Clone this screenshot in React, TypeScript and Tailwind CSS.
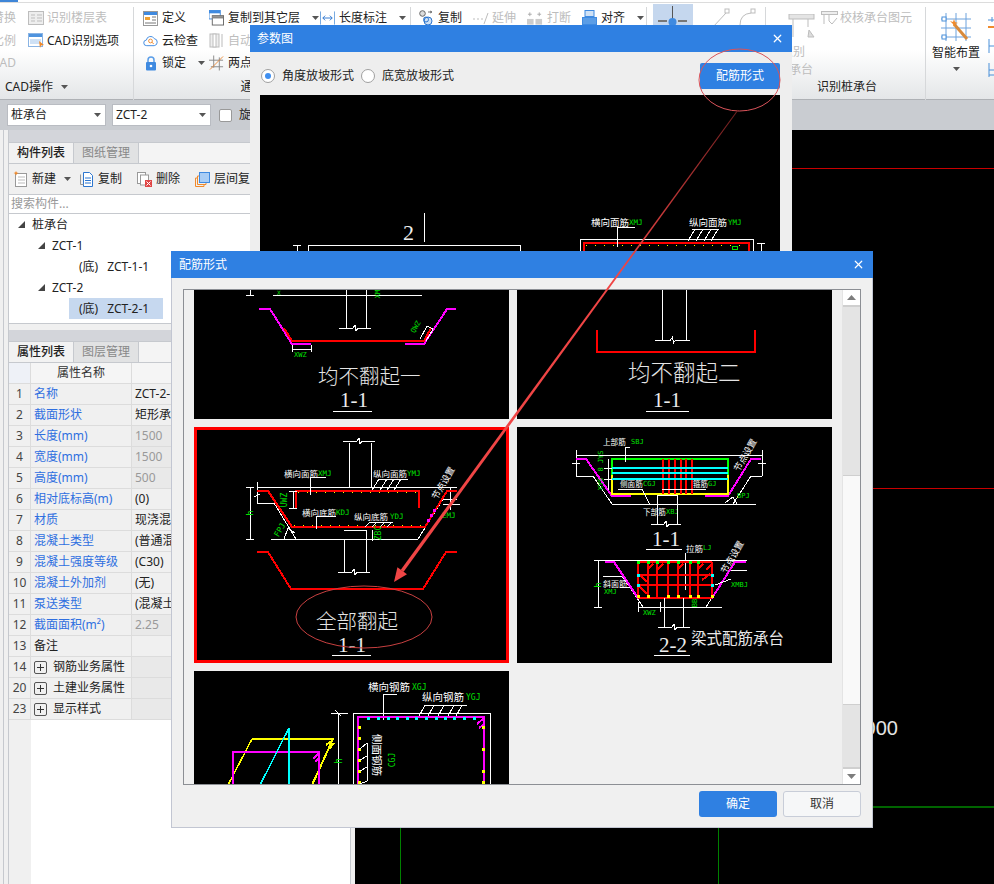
import React from "react";
import { X } from "lucide-react";

const GRAY = "#bdbdbd";
const MONO = "font-['DejaVu_Sans_Mono',monospace]";

function L({ p, c = "#fff", w = 1, dash }: { p: string; c?: string; w?: number; dash?: string }) {
  return <polyline points={p} fill="none" stroke={c} strokeWidth={w} strokeDasharray={dash} />;
}
function T({ x, y, s = 9, c = "#fff", r, a, children }: { x: number; y: number; s?: number; c?: string; r?: number; a?: "start" | "middle" | "end"; children: React.ReactNode }) {
  const green = c === "#00e000";
  return (
    <text x={x} y={y} fontSize={s} fill={c} textAnchor={a} dominantBaseline="central" className={green ? MONO : undefined} transform={r !== undefined ? `rotate(${r} ${x} ${y})` : undefined}>
      {children}
    </text>
  );
}
function Title({ x, y, s = 20, children }: { x: number; y: number; s?: number; children: React.ReactNode }) {
  return (
    <text x={x} y={y} fontSize={s} fill="#e4e4e4" fontWeight={300} dominantBaseline="central">{children}</text>
  );
}
function Sec({ x, y, u, x1, x2, label = "1-1" }: { x: number; y: number; u: number; x1: number; x2: number; label?: string }) {
  return (
    <>
      <text x={x} y={y} fontSize={21} fill="#ececec" dominantBaseline="central" className="font-['Liberation_Serif',serif]">{label}</text>
      <L p={`${x1},${u} ${x2},${u}`} />
    </>
  );
}
function Cap({ x1, x2, y }: { x1: number; x2: number; y: number }) {
  const m = (x1 + x2) / 2;
  return <L p={`${x1},${y} ${m - 2},${y} ${m},${y - 3} ${m + 1},${y + 3} ${m + 3},${y} ${x2},${y}`} />;
}
function Hatch({ xs, y1, y2, d = 7 }: { xs: number[]; y1: number; y2: number; d?: number }) {
  return <>{xs.map((x) => <L key={x} p={`${x},${y2} ${x + d},${y1}`} />)}</>;
}
function Dots({ pts, c }: { pts: number[][]; c: string }) {
  return <>{pts.map(([x, y], i) => <rect key={i} x={x - 1} y={y - 1} width={2.5} height={2.5} fill={c} />)}</>;
}

function Panel1() {
  return (
    <svg viewBox="194 290 315 129" className="w-full h-full block bg-black" shapeRendering="crispEdges">
      <L p="273,295 422,295" />
      <L p="246,295 254,295" /><L p="250,290 250,295" />
      <L p="346,290 346,328" /><L p="366,290 366,328" />
      <Cap x1={339} x2={371} y={328} />
      <T x={277} y={292} s={6} c="#00e000">X</T>
      <T x={378} y={292} s={7} c="#00e000" r={-90} a="middle">XMJ</T>
      <L p="259,309 270,309 292,344 311,344" c="#ff00ff" w={2} />
      <L p="405,344 424,344 447,309 456,309" c="#ff00ff" w={2} />
      <L p="284,328 292,341 424,341 431,328" c="#ff0000" w={2} />
      <L p="292,345 292,352" /><L p="311,345 311,352" /><L p="292,349 311,349" />
      <T x={294} y={355} s={7} c="#00e000">XWZ</T>
      <T x={416} y={327} s={7} c="#00e000" r={-60} a="middle">QWZ</T>
      <L p="420,339 427,326 433,329 426,341" />
      <Title x={318} y={376} s={20.5}>均不翻起一</Title>
      <Sec x={340} y={400} u={411} x1={333} x2={372} />
    </svg>
  );
}
function Panel2() {
  return (
    <svg viewBox="517 290 315 129" className="w-full h-full block bg-black" shapeRendering="crispEdges">
      <L p="662,290 662,340" /><L p="686,290 686,340" />
      <Cap x1={655} x2={690} y={340} />
      <L p="597,330 597,352 755,352 755,330" c="#ff0000" w={2} />
      <Title x={628} y={372} s={22.5}>均不翻起二</Title>
      <Sec x={653} y={400} u={411} x1={646} x2={689} />
    </svg>
  );
}
function Panel3() {
  return (
    <svg viewBox="197 430 309 230" className="w-full h-full block bg-black" shapeRendering="crispEdges">
      <L p="349,443 349,487" /><L p="371,443 371,487" />
      <Cap x1={343} x2={375} y={441} />
      <L p="257,487 457,487" />
      <L p="246,487 254,487" /><L p="246,539 254,539" /><L p="250,487 250,539" />
      <T x={250} y={513} s={9} c="#00e000" r={-90} a="middle">h</T>
      <L p="257,482 257,503" /><L p="254,497 260,494" /><L p="257,503 274,503 296,539" />
      <L p="271,539 418,539 443,499 457,499" />
      <L p="450,487 450,510" /><L p="443,504 460,504" />
      <L p="257,491 268,491 292,527 425,527 447,491 457,491" c="#ff0000" w={2} />
      <L p="296,508 296,491 419,491 419,508" c="#ff0000" w={2} />
      <L p="298,492 418,492" c="#ffff00" dash="1 8" />
      <L p="294,525 424,525" c="#ffff00" dash="1 8" />
      <L p="293,491 293,508" /><L p="289,491 297,491" /><L p="289,508 297,508" />
      <T x={284} y={500} s={8} c="#00e000" r={-90} a="middle">UWZ</T>
      <T x={284} y={473} s={8.5}>横向面筋</T><T x={318} y={473} s={7.5} c="#00e000">XMJ</T>
      <L p="326,477 310,477 310,495" />
      <T x={373} y={473} s={8.5}>纵向面筋</T><T x={407} y={473} s={7.5} c="#00e000">YMJ</T>
      <Hatch xs={[372, 380, 387, 394]} y1={479} y2={490} d={7} />
      <L p="379,479 408,479" />
      <T x={302} y={512} s={8.5}>横向底筋</T><T x={336} y={512} s={7.5} c="#00e000">KDJ</T>
      <L p="336,516 316,516 316,529" />
      <T x={354} y={516} s={8.5}>纵向底筋</T><T x={390} y={516} s={7.5} c="#00e000">YDJ</T>
      <Hatch xs={[365, 372, 380, 387]} y1={522} y2={527} d={5} />
      <L p="369,522 393,522" />
      <L p="344,539 344,572" /><L p="366,530 366,572" /><L p="344,530 366,530" />
      <Cap x1={338} x2={370} y={572} />
      <T x={378} y={533} s={8} c="#00e000" r={-90} a="middle">ZBC</T>
      <L p="372,530 372,541" />
      <T x={280} y={530} s={8} c="#00e000" r={-60} a="middle">FPJ</T>
      <L p="284,539 288,528 295,533" />
      <T x={442} y={515} s={7.5} c="#00e000">EMJ</T>
      <T x={443} y={483} s={9} r={-60} a="middle">节点设置</T>
      <Dots pts={[[428, 520], [431, 515], [434, 510]]} c="#ff00ff" />
      <L p="257,552 268,552 291,589 423,589 446,552 457,552" c="#ff0000" w={2} />
      <Title x={316} y={621} s={20.5}>全部翻起</Title>
      <Sec x={338} y={645} u={655} x1={332} x2={371} />
    </svg>
  );
}
function Panel4() {
  const gridX = [638, 648, 657, 668, 678, 690, 698, 712];
  return (
    <svg viewBox="517 427 315 236" className="w-full h-full block bg-black" shapeRendering="crispEdges">
      <L p="576,455 762,455" /><L p="576,450 576,476" /><L p="762,450 762,476" />
      <L p="572,463 580,463" /><L p="758,463 766,463" />
      <L p="576,476 593,476 612,504 756,504" /><L p="733,504 751,476 762,476" />
      <L p="576,459 586,459 612,496 631,496" c="#ff00ff" w={2} />
      <L p="705,496 728,496 751,459 761,459" c="#ff00ff" w={2} />
      <L p="612,475 612,459 728,459 728,475" c="#00ff00" w={2} />
      <L p="612,475 612,494 728,494 728,475" c="#ffff00" w={2} />
      {[663, 669, 675, 681, 686, 692].map((x) => <L key={x} p={`${x},459 ${x},494`} c="#ff0000" w={2} />)}
      {[468, 473, 479].map((y) => <L key={y} p={`612,${y} 728,${y}`} c="#00ffff" w={2} />)}
      <L p="608,459 608,490" /><L p="604,468 612,468" /><L p="604,479 612,479" />
      <T x={603} y={442} s={7.6}>上部筋</T><T x={631} y={442} s={7} c="#00e000">SBJ</T>
      <L p="630,447 625,447 625,462" />
      <T x={601} y={461} s={7} c="#00e000" r={-90} a="middle">8 JYS</T>
      <T x={601} y={484} s={7} c="#00e000" r={-90} a="middle">XYS</T>
      <T x={620} y={484} s={7.6}>侧面筋</T><T x={643} y={484} s={7} c="#00e000">CGJ</T>
      <L p="618,489 643,489" /><L p="642,489 650,505" />
      <T x={693} y={484} s={7.5}>箍筋</T><T x={708} y={484} s={7} c="#00e000">GJ</T>
      <L p="662,489 706,489" />
      <T x={643} y={512} s={7.6}>下部筋</T><T x={666} y={512} s={7} c="#00e000">XBJ</T>
      <T x={745} y={455} s={9} r={-60} a="middle">节点设置</T>
      <T x={737} y={496} s={7} c="#00e000">BPJ</T>
      <L p="725,503 733,497 737,504" />
      <L p="657,495 657,524" /><L p="677,495 677,524" /><L p="657,495 677,495" />
      <Cap x1={651} x2={681} y={524} />
      <Sec x={652} y={539} u={549} x1={646} x2={682} />
      <T x={686} y={548} s={8.5}>拉筋</T><T x={703} y={548} s={7} c="#00e000">LJ</T>
      <L p="685,553 685,590" />
      <L p="600,560 747,560" />
      <L p="594,560 602,560" /><L p="594,607 602,607" /><L p="598,560 598,607" />
      <T x={598} y={585} s={9} c="#00e000" r={-90} a="middle">h</T>
      <L p="603,576 622,576 643,607 722,607" /><L p="706,607 730,570 747,570" />
      <L p="605,562 614,562 638,598 659,598" c="#ff00ff" w={2} />
      <L p="688,598 712,598 735,562 746,562" c="#ff00ff" w={2} />
      {gridX.map((x) => <L key={x} p={`${x},562 ${x},598`} c="#ff0000" w={2} />)}
      {[562, 575, 585, 598].map((y) => <L key={y} p={`638,${y} 712,${y}`} c="#ff0000" w={2} />)}
      {[650, 660, 680, 700, 709].map((x) => <L key={x} p={`${x - 3},570 ${x + 3},564`} c="#ff0000" w={2} />)}
      <L p="640,575 647,582" c="#ff0000" w={2} /><L p="640,587 647,594" c="#ff0000" w={2} /><L p="702,580 710,574" c="#ff0000" w={2} />
      <Dots pts={[[638, 562], [648, 562], [657, 562], [668, 562], [678, 562], [690, 562], [698, 562]]} c="#00ff00" />
      <Dots pts={[[638, 575], [638, 585], [712, 575], [712, 585]]} c="#00ffff" />
      <Dots pts={[[638, 596], [648, 596], [668, 596], [678, 596], [690, 596], [698, 596], [712, 596]]} c="#ffff00" />
      <T x={603} y={583} s={8}>斜面筋</T><T x={604} y={592} s={7} c="#00e000">XMJ</T>
      <L p="620,587 629,587" />
      <T x={731} y={585} s={7} c="#00e000">XMBJ</T>
      <L p="715,585 731,579" />
      <T x={732} y={557} s={9} r={-60} a="middle">节点设置</T>
      <L p="638,607 660,607" /><L p="638,602 638,612" /><L p="660,602 660,612" />
      <T x={643} y={613} s={7} c="#00e000">XWZ</T>
      <L p="664,598 664,627" /><L p="683,598 683,627" />
      <Cap x1={658} x2={690} y={627} />
      <T x={695} y={603} s={7} c="#00e000" r={-90} a="middle">BB</T>
      <Sec x={659} y={645} u={655} x1={654} x2={690} label="2-2" />
      <T x={691} y={638} s={15.5} c="#e8e8e8">梁式配筋承台</T>
    </svg>
  );
}
function Panel5() {
  const top = [368, 378, 388, 397, 407, 416, 426, 436, 445, 454, 464, 474];
  return (
    <svg viewBox="194 671 315 114" className="w-full h-[114px] block bg-black" shapeRendering="crispEdges">
      <T x={368} y={687} s={10.5}>横向钢筋</T><T x={412} y={687} s={8} c="#00e000">XGJ</T>
      <L p="397,694 383,694 383,720" />
      <T x={422} y={697} s={10.5}>纵向钢筋</T><T x={466} y={697} s={8} c="#00e000">YGJ</T>
      <L p="424,705 467,705" />
      <Hatch xs={[418, 427, 437, 447, 455]} y1={705} y2={718} d={7} />
      <L p="353,785 353,713 490,713 490,785" />
      <L p="358,785 358,717 484,717 484,785" c="#ff00ff" w={2} />
      <Dots pts={top.map((x) => [x, 718])} c="#00ffff" />
      <Dots pts={[[359, 727], [359, 738], [359, 749], [359, 760], [359, 771], [359, 782], [483, 727], [483, 749], [483, 771], [483, 782]]} c="#ffff00" />
      <L p="477,724 484,718" c="#ff00ff" w={2} /><L p="479,728 484,724" c="#ff00ff" w={2} />
      <L p="331,713 348,713" /><L p="338,713 338,785" /><L p="335,710 341,716" />
      <T x={338} y={761} s={10} c="#00e000" r={-90} a="middle">h</T>
      <L p="367,743 367,781 360,784" />
      <Hatch xs={[360]} y1={743} y2={749} d={7} /><Hatch xs={[360]} y1={756} y2={760} d={7} /><Hatch xs={[360]} y1={767} y2={771} d={7} />
      <T x={377} y={755} s={10.5} r={90} a="middle">侧面钢筋</T>
      <T x={392} y={760} s={8} c="#00e000" r={-90} a="middle">CGJ</T>
      <L p="252,739 333,739 312,785" c="#ffff00" w={2} />
      <L p="252,739 228,785" c="#ffff00" w={1.5} />
      <L p="326,745 333,740" c="#ffff00" w={2} /><L p="329,749 334,743" c="#ffff00" w={2} />
      <L p="233,785 233,752 319,752 319,785" c="#ff00ff" w={2} />
      <L p="313,759 319,753" c="#ff00ff" w={2} /><L p="315,762 319,758" c="#ff00ff" w={2} />
      <L p="289,728 289,785" c="#00ffff" w={2} />
      <L p="289,728 260,785" c="#00ffff" w={1.5} />
    </svg>
  );
}

const Caret = ({ cls = "ml-2" }: { cls?: string }) => (
  <svg width="7" height="4" viewBox="0 0 7 4" className={cls + " shrink-0"}><path d="M0 0h7L3.5 4z" fill="#555" /></svg>
);

function Item({ icon, label, gray, caret, w = 15, gap = 4, cls = "" }: { icon?: React.ReactNode; label: string; gray?: boolean; caret?: boolean; w?: number; gap?: number; cls?: string }) {
  return (
    <div className={"flex items-center h-[22.5px] text-[12px] whitespace-nowrap " + cls} style={{ gap }}>
      {icon && <span className="flex items-center justify-center shrink-0" style={{ width: w }}>{icon}</span>}
      <span className={gray ? "text-[#bdbdbd]" : "text-[#222]"}>{label}</span>
      {caret && <Caret />}
    </div>
  );
}

const I = {
  layerTbl: <svg width="18" height="15" viewBox="0 0 18 15"><rect x=".5" y=".5" width="15" height="13" fill="#eee" stroke={GRAY} /><path d="M3 4h4M3 7h4M3 10h4M9 4h5M9 7h5M9 10h5" stroke={GRAY} /></svg>,
  cad: <svg width="18" height="16" viewBox="0 0 18 16"><rect x=".5" y=".5" width="14" height="13" fill="#fff" stroke="#8ab4e4" /><rect x="1" y="1" width="13" height="3" fill="#4e93de" /><rect x="2" y="6" width="11" height="5" fill="#cfe1f5" /><path d="M11 8l5 4-3 .5-1 2.5z" fill="#f08a2c" /></svg>,
  def: <svg width="15" height="15" viewBox="0 0 15 15"><rect x=".5" y=".5" width="14" height="14" fill="#fff" stroke="#999" /><rect x="1" y="1" width="13" height="3" fill="#3f8ae0" /><rect x="2" y="6" width="5" height="3" fill="#f0a030" /><path d="M9 6h4M9 9h4M2 12h11" stroke="#777" /></svg>,
  cloud: <svg width="16" height="13" viewBox="0 0 16 13"><path d="M4 12a3 3 0 0 1-.4-6A4.5 4.5 0 0 1 12 4.500a3.800 3.800 0 0 1 0 7.500z" fill="#fff" stroke="#3f8ae0" /><circle cx="8" cy="7" r="2" fill="none" stroke="#f08a2c" /><path d="M9.500 8.500l2 1.500" stroke="#f08a2c" /></svg>,
  lock: <svg width="12" height="15" viewBox="0 0 12 15"><path d="M3 7V4a3 3 0 0 1 6 0v3" fill="none" stroke="#5a9de8" strokeWidth="1.500" /><rect x="1" y="6" width="10" height="8.500" rx="1" fill="#3f8ae0" /><circle cx="6" cy="10" r="1.300" fill="#fff" /></svg>,
  copyLayer: <svg width="16" height="16" viewBox="0 0 16 16"><rect x="0" y="0" width="12" height="9" fill="#fff" stroke="#3f8ae0" /><rect y="0" width="12" height="3" fill="#3f8ae0" /><rect x="3.500" y="5.500" width="12" height="10" fill="#fff" stroke="#666" /><rect x="4" y="6" width="11" height="2.500" fill="#888" /></svg>,
  auto: <svg width="15" height="15" viewBox="0 0 15 15"><rect x="1" y="1" width="9" height="13" fill="#eee" stroke={GRAY} /><rect x="4" y="1" width="3" height="13" fill="#fff" stroke={GRAY} /><rect x="12" y="1" width="2" height="13" fill="#ddd" /></svg>,
  two: <svg width="16" height="16" viewBox="0 0 16 16"><path d="M0 5h15M2 12h13M5 0v13M11 2v14" stroke="#888" /><path d="M1 15L15 1" stroke="#e88a3a" /></svg>,
  dim: <svg width="16" height="14" viewBox="0 0 16 14"><path d="M.5 0v14M15.500 0v14" stroke="#6ca2dd" /><path d="M3 7h10M3 7l2.500-2.500M3 7l2.500 2.500M13 7l-2.500-2.500M13 7l-2.500 2.500" stroke="#2d76cf" fill="none" /></svg>,
  copy: <svg width="15" height="16" viewBox="0 0 15 16"><circle cx="3.500" cy="3.500" r="2.800" fill="#ddd" stroke="#666" /><circle cx="9" cy="11" r="4" fill="#cfe1f5" stroke="#2d76cf" /><circle cx="7" cy="9.500" r="2.500" fill="none" stroke="#2d76cf" /><path d="M9 2h4M11 1l2 1-2 1" fill="none" stroke="#777" /></svg>,
  extend: <svg width="17" height="12" viewBox="0 0 17 12"><path d="M0 7h2M4 7h2M8 7h2" stroke={GRAY} /><path d="M11 12l4-11" stroke={GRAY} /></svg>,
  breakI: <svg width="17" height="14" viewBox="0 0 17 14"><rect y="8" width="7" height="6" fill="#ccc" /><rect x="9" y="8" width="7" height="6" fill="#ccc" /><path d="M3 1v4M1 3h4M13 1v4M11 3h4" stroke="#aaa" /></svg>,
  align: <svg width="15" height="16" viewBox="0 0 15 16"><rect x="3" y=".5" width="9" height="6" fill="#cfe1f5" stroke="#3f8ae0" /><rect x=".5" y="7.500" width="14" height="7" fill="#5b9de6" stroke="#3f8ae0" /><path d="M0 15.500h15" stroke="#444" /></svg>,
  newI: <svg width="14" height="16" viewBox="0 0 14 16"><rect x="2.500" y="2.500" width="11" height="13" fill="#fff" stroke="#999" /><path d="M5 6h7M5 9h7M5 12h7" stroke="#bbb" /><path d="M3 0l.8 1.500L5.500 2l-1.500.8L3 4.500 2.200 2.800.5 2l1.700-.5z" fill="#f08a2c" /></svg>,
  copyDoc: <svg width="13" height="15" viewBox="0 0 13 15"><path d="M3.500.5h6l3 3v11h-9z" fill="#fff" stroke="#2d76cf" /><path d="M.5 2.500v10h3" fill="none" stroke="#999" /><path d="M5 6h6M5 8.500h6M5 11h6" stroke="#2d76cf" /></svg>,
  del: <svg width="15" height="15" viewBox="0 0 15 15"><rect x=".5" y=".5" width="8" height="11" fill="#fff" stroke="#999" /><rect x="3.500" y="3" width="8" height="10" fill="#fff" stroke="#999" /><rect x="8" y="8" width="7" height="7" fill="#e04545" /><path d="M9.500 9.500l4 4M13.500 9.500l-4 4" stroke="#fff" /></svg>,
  layerCopy: <svg width="15" height="15" viewBox="0 0 15 15"><rect x="4.500" y=".5" width="10" height="10" fill="#a9cdf5" stroke="#3f8ae0" /><path d="M4 4H2.500v8.500H11V11M2 6H.5v8.500H9V13" fill="none" stroke="#f08a2c" /></svg>,
};

function Ribbon() {
  const grp = "flex flex-col h-[93px] shrink-0 border-r border-[#d6d8da]";
  const tools = "flex h-[66px]";
  const lab = "h-[22px] mt-[3px] flex items-center text-[12px] text-[#222] whitespace-nowrap";
  return (
    <div className="h-[100px] shrink-0 bg-linear-to-b from-white from-50% to-[#e4e6e8] border-b border-[#aeb1b5]">
      <div className="h-[3px] border-b border-[#dcdcdc]"><div className="w-[18px] h-[2px] bg-[#3f86d8]" /></div>
      <div className="flex pt-[4px]">
        <div className={grp + " w-[134px]"}>
          <div className={tools}>
            <div className="w-[28px] -ml-[8px] mr-[8px]">
              <Item label="替换" gray /><Item label="比例" gray /><Item label="CAD" gray />
            </div>
            <div>
              <Item icon={I.layerTbl} label="识别楼层表" gray w={18} gap={1} />
              <Item icon={I.cad} label="CAD识别选项" w={18} gap={1} />
            </div>
          </div>
          <div className={lab + " pl-[5px]"}>CAD操作<Caret /></div>
        </div>
        <div className={grp + " w-[277px] pl-[9px]"}>
          <div className={tools}>
            <div className="w-[66px]">
              <Item icon={I.def} label="定义" />
              <Item icon={I.cloud} label="云检查" />
              <Item icon={I.lock} label="锁定" caret />
            </div>
            <div className="w-[111px]">
              <Item icon={I.copyLayer} label="复制到其它层" caret />
              <Item icon={I.auto} label="自动" gray />
              <Item icon={I.two} label="两点" />
            </div>
            <div>
              <Item icon={I.dim} label="长度标注" caret />
            </div>
          </div>
          <div className={lab + " justify-center pr-[9px]"}>通用操作<Caret /></div>
        </div>
        <div className={grp + " w-[236px] pl-[8px]"}>
          <div className="flex gap-[11px]">
            <Item icon={I.copy} label="复制" />
            <Item icon={I.extend} label="延伸" gray w={17} gap={2} />
            <Item icon={I.breakI} label="打断" gray w={16} />
            <Item icon={I.align} label="对齐" caret />
          </div>
        </div>
        <div className={grp + " w-[119px] pl-[6px]"}>
          <div className="flex -mt-[3px]">
            <div className="w-[40px] h-[36px] bg-[#c5d7ee] flex justify-center">
              <svg width="40" height="30" viewBox="0 0 40 30"><path d="M19.500 2v14" stroke="#555" /><path d="M5 17h9M25 17h9" stroke="#777" strokeWidth="2" /><circle cx="19.500" cy="18" r="4" fill="#3f8ae0" /></svg>
            </div>
            <svg width="46" height="22" viewBox="0 0 46 22" className="ml-[19px] mt-[3px]"><path d="M1 20L14 6" stroke={GRAY} /><rect x="13" y="2" width="4" height="4" fill="#fff" stroke={GRAY} /><path d="M28 18q0-11 11-12" fill="none" stroke={GRAY} /><rect x="39" y="2" width="4" height="4" fill="#fff" stroke={GRAY} /></svg>
          </div>
        </div>
        <div className={grp + " w-[160px] pl-[15px]"}>
          <div className="flex h-[66px]">
            <div className="w-[40px] flex flex-col items-center">
              <svg width="27" height="27" viewBox="0 0 27 27" className="mt-[7px] shrink-0"><rect x="1" y="0" width="25" height="5" fill="#e4e4e4" stroke={GRAY} /><path d="M5 5v18M20 5v8" stroke={GRAY} /><path d="M21 16l5 7h-6z" fill="#ddd" stroke={GRAY} /></svg>
              <span className="text-[12px] mt-[2px] leading-[18px] text-[#bdbdbd] whitespace-nowrap -ml-[16px]">识别</span>
              <span className="text-[12px] leading-[18px] text-[#bdbdbd] whitespace-nowrap">承台</span>
            </div>
            <Item icon={<svg width="17" height="14" viewBox="0 0 17 14"><rect x=".5" y=".5" width="16" height="3" fill="#eee" stroke={GRAY} /><path d="M3 4v9M8 4v6M8 10l3 3 5-6" fill="none" stroke={GRAY} /></svg>} label="校核承台图元" gray w={17} gap={2} />
          </div>
          <div className={lab + " pl-[36px]"}>识别桩承台</div>
        </div>
        <div className="w-[62px] shrink-0 flex flex-col items-center pr-[2px]">
          <svg width="30" height="30" viewBox="0 0 30 30" className="mt-[5px] shrink-0"><path d="M5 1v28M15 1v28M25 1v28M0 7h30M0 16h30M0 25h30" stroke="#6ca2dd" fill="none" /><path d="M13 12l13 15" stroke="#d98a3a" strokeWidth="3" /><path d="M9 9l3 1 1-3 1 3 3 1-3 1-1 3-1-3z" fill="#f08a2c" /><rect x="1" y="5" width="4" height="4" fill="#fff" stroke="#4a90d9" /><rect x="1" y="23" width="4" height="4" fill="#fff" stroke="#4a90d9" /></svg>
          <span className="text-[12px] mt-[3px] leading-[16px] text-[#222] whitespace-nowrap">智能布置</span>
          <Caret cls="mt-[6px]" />
        </div>
        <div className="flex flex-col gap-[10px] pt-[10px]">
          <svg width="8" height="12" viewBox="0 0 8 12"><path d="M4 0v5M0 3h8" stroke="#4a90d9" /><path d="M0 10h8" stroke="#f08a2c" strokeWidth="2" /></svg>
          <svg width="8" height="14" viewBox="0 0 8 14"><path d="M1 0v14M1 7h7" stroke="#4a90d9" /></svg>
          <svg width="8" height="14" viewBox="0 0 8 14"><path d="M1 0v14M1 7h7M1 12h7" stroke="#4a90d9" /></svg>
        </div>
      </div>
    </div>
  );
}

function Combo({ label }: { label: string }) {
  return (
    <div className="w-[99px] h-[22px] bg-white border border-[#b9bcc2] flex items-center justify-between pl-[3px] pr-[4px] text-[12px] text-[#222]">
      {label}<Caret cls="" />
    </div>
  );
}

function Toolbar() {
  return (
    <div className="h-[30px] shrink-0 bg-[#c9ccd1] flex items-center pl-[7px] gap-[6px]">
      <Combo label="桩承台" />
      <Combo label="ZCT-2" />
      <div className="w-[13px] h-[13px] ml-[2px] bg-white border border-[#999] rounded-[2px]" />
      <span className="text-[12px] text-[#222] ml-[1px]">旋转</span>
    </div>
  );
}

function Tabs({ a, b }: { a: string; b: string }) {
  return (
    <div className="h-[22px] shrink-0 flex text-[12px] bg-[#f4f4f4] border-y border-[#c6c9ce]">
      <div className="w-[65px] pl-[8px] bg-[#f2f2f2] border-r border-[#c6c9ce] font-medium text-[#222] leading-[20px]">{a}</div>
      <div className="w-[65px] pl-[8px] bg-[#e1e2e3] border-r border-[#c6c9ce] text-[#888] leading-[20px]">{b}</div>
    </div>
  );
}

function Tree({ pl, tri, label, val, sel }: { pl: number; tri?: boolean; label?: string; val?: string; sel?: boolean }) {
  return (
    <div className="h-[21px] flex items-center text-[12px] text-[#222]" style={{ paddingLeft: pl }}>
      {tri && <svg width="7" height="7" viewBox="0 0 7 7" className="mr-[7px]"><path d="M7 0v7H0z" fill="#444" /></svg>}
      {label}
      {val && (
        <div className={"flex h-[21px] items-center pl-[10px] w-[94px] gap-[9px] " + (sel ? "bg-[#c6d8ef]" : "")}>
          <span>(底)</span><span>{val}</span>
        </div>
      )}
    </div>
  );
}

const rows: [number, string, string, boolean?][] = [
  [1, "名称", "ZCT-2-1"],
  [2, "截面形状", "矩形承台"],
  [3, "长度(mm)", "1500", true],
  [4, "宽度(mm)", "1500", true],
  [5, "高度(mm)", "500", true],
  [6, "相对底标高(m)", "(0)"],
  [7, "材质", "现浇混凝土"],
  [8, "混凝土类型", "(普通混凝土)"],
  [9, "混凝土强度等级", "(C30)"],
  [10, "混凝土外加剂", "(无)"],
  [11, "泵送类型", "(混凝土泵)"],
  [12, "截面面积(m²)", "2.25", true],
];
const cell = "h-[21px] border-b border-r border-[#dcdcdc] flex items-center text-[12px] whitespace-nowrap overflow-hidden";
const numCell = cell + " bg-[#f0f0f0] justify-center text-[#444]";

function PropTable() {
  return (
    <div className="grid grid-cols-[22px_101px_1fr] shrink-0">
      <div className={cell + " bg-[#eef1f7]"} />
      <div className={cell + " bg-[#f5f5f5] justify-center text-[#333]"}>属性名称</div>
      <div className={cell + " bg-[#f5f5f5]"} />
      {rows.map(([n, name, v, g]) => (
        <React.Fragment key={n}>
          <div className={numCell}>{n}</div>
          <div className={cell + " pl-[3px] text-[#2f6fe0]"}>{name}</div>
          <div className={cell + " pl-[3px] " + (g ? "bg-[#e9e9e9] text-[#999]" : "text-[#222]")}>{v}</div>
        </React.Fragment>
      ))}
      <div className={numCell}>13</div>
      <div className={cell + " pl-[3px] text-[#222]"}>备注</div>
      <div className={cell} />
      {([[14, "钢筋业务属性"], [20, "土建业务属性"], [23, "显示样式"]] as [number, string][]).map(([n, t]) => (
        <React.Fragment key={n}>
          <div className={numCell}>{n}</div>
          <div className={cell + " pl-[3px] text-[#222] gap-[6px]"}>
            <span className="w-[13px] h-[13px] border border-[#555] rounded-[2px] flex items-center justify-center">
              <svg width="7" height="7" viewBox="0 0 7 7"><path d="M3.500 0v7M0 3.500h7" stroke="#333" /></svg>
            </span>
            {t}
          </div>
          <div className={cell + " bg-[#e9e9e9]"} />
        </React.Fragment>
      ))}
    </div>
  );
}

function LeftPanel() {
  return (
    <div className="w-[355px] shrink-0 bg-[#f0f0f0] pr-[4px] flex">
      <div className="w-[3px] shrink-0" />
      <div className="w-[1px] shrink-0 bg-[#c6c9ce]" />
      <div className="w-[4px] shrink-0" />
      <div className="flex-1 flex flex-col border-x border-[#c6c9ce] min-w-0">
        <div className="h-[12px] shrink-0 bg-[#d3d5da]" />
        <Tabs a="构件列表" b="图纸管理" />
        <div className="h-[31px] shrink-0 bg-[#f0f0f0] border-b border-[#c6c9ce] flex items-center pl-[3px] gap-[15px]">
          <div className="flex items-center"><Item icon={I.newI} label="新建" w={15} gap={5} /><Caret /></div>
          <Item icon={I.copyDoc} label="复制" w={13} gap={5} cls="-ml-[6px]" />
          <Item icon={I.del} label="删除" w={15} gap={4} />
          <Item icon={I.layerCopy} label="层间复制" w={15} gap={4} />
        </div>
        <div className="h-[19px] shrink-0 bg-white border-b border-[#c6c9ce] pl-[2px] text-[12px] text-[#999] flex items-center">搜索构件...</div>
        <div className="h-[110px] shrink-0 bg-white border-b border-[#c6c9ce]">
          <Tree pl={9} tri label="桩承台" />
          <Tree pl={29} tri label="ZCT-1" />
          <Tree pl={60} val="ZCT-1-1" />
          <Tree pl={29} tri label="ZCT-2" />
          <Tree pl={60} val="ZCT-2-1" sel />
        </div>
        <div className="h-[6px] shrink-0 bg-[#f0f0f0]" />
        <div className="h-[11px] shrink-0 bg-[#d3d5da]" />
        <Tabs a="属性列表" b="图层管理" />
        <PropTable />
        <div className="flex-1 flex bg-white">
          <div className="w-[22px] bg-[#f0f0f0]" />
        </div>
      </div>
    </div>
  );
}

function Canvas() {
  return (
    <div className="flex-1 bg-black relative overflow-hidden">
      <svg viewBox="355 130 639 754" className="absolute inset-0 w-full h-full font-['Liberation_Sans',sans-serif]" shapeRendering="crispEdges">
        <L p="355,168 994,168" c="#c80000" />
        <L p="355,488 994,488" c="#c80000" />
        <L p="355,806.500 994,806.500" c="#006400" w={2} />
        <L p="400,130 400,884" c="#008000" />
        <L p="718,130 718,884" c="#008000" />
        <text x="898" y="728" fontSize="20" fill="#e4e4e4" textAnchor="end" dominantBaseline="central">1000</text>
      </svg>
    </div>
  );
}

function Radio({ on, label }: { on?: boolean; label: string }) {
  return (
    <div className="flex items-center gap-[7px] text-[12px] text-[#222]">
      <span className="w-[14px] h-[14px] rounded-full bg-white border border-[#a0a0a0] flex items-center justify-center">
        {on && <span className="w-[6px] h-[6px] rounded-full bg-[#3f8ff0]" />}
      </span>
      {label}
    </div>
  );
}

function Dialog1() {
  return (
    <div className="absolute left-[250px] top-[25px] w-[542px] h-[400px] bg-[#eeeeee] flex flex-col">
      <div className="h-[27px] shrink-0 bg-[#2f80e2] flex items-center justify-between pl-[7px] pr-[8px] text-[12px] text-white">
        参数图<X size={13} strokeWidth={2.2} color="#fff" />
      </div>
      <div className="h-[43px] shrink-0 flex items-start justify-between pl-[11px] pr-[12px] pt-[11px]">
        <div className="flex items-center gap-[7px] h-[26px]">
          <Radio on label="角度放坡形式" /><Radio label="底宽放坡形式" />
        </div>
        <div className="w-[80px] h-[26px] bg-[#2f80e2] rounded-[2px] flex items-center justify-center text-[12px] text-white">配筋形式</div>
      </div>
      <div className="ml-[10px] mr-[12px] h-[156px] shrink-0 bg-black overflow-hidden">
        <svg viewBox="260 95 520 156" className="w-full h-full block" shapeRendering="crispEdges">
          <text x="403" y="232" fontSize="22" fill="#eee" dominantBaseline="central" className="font-['Liberation_Serif',serif]">2</text>
          <L p="424,213 424,242" />
          <L p="308,251 308,245 520,245 520,251" />
          <L p="297,245 297,251" /><L p="293,245 301,245" />
          <L p="580,251 580,239 753,239 753,251" />
          <L p="584,251 584,243 749,243 749,251" c="#ff0000" w={2} />
          <L p="586,245 747,245" c="#ffff00" dash="1 8" />
          <T x={591} y={222} s={9.5}>横向面筋</T><T x={629} y={222} s={7.5} c="#00e000">XMJ</T>
          <L p="635,227 617,227 617,247" />
          <T x={689} y={222} s={9.5}>纵向面筋</T><T x={728} y={222} s={7.5} c="#00e000">YMJ</T>
          <L p="692,229 719,229" /><Hatch xs={[688, 696, 704, 711]} y1={229} y2={241} d={7} />
          <L p="761,243 761,251" /><L p="757,243 765,243" />
          <ellipse cx="735" cy="248" rx="3" ry="1.500" fill="none" stroke="#00e000" />
        </svg>
      </div>
    </div>
  );
}

function Dialog2() {
  return (
    <div className="absolute left-[171px] top-[251px] w-[702px] h-[577px] bg-[#f0f0f0] border-x border-b border-[#c2c6d2] flex flex-col">
      <div className="h-[27px] shrink-0 -mx-px bg-[#2f80e2] flex items-center justify-between pl-[8px] pr-[8px] text-[12px] text-white">
        配筋形式<X size={13} strokeWidth={2.2} color="#fff" />
      </div>
      <div className="mt-[11px] mx-[11px] h-[496px] shrink-0 border border-[#8c8f94] flex overflow-hidden">
        <div className="flex-1 min-w-0 overflow-hidden pl-[10px]">
          <div className="grid grid-cols-[315px_315px] grid-rows-[129px_236px_114px] gap-2">
            <Panel1 />
            <Panel2 />
            <div className="border-[3px] border-[#ff0000] bg-black"><Panel3 /></div>
            <Panel4 />
            <Panel5 />
          </div>
        </div>
        <div className="w-[18px] shrink-0 flex flex-col bg-[#e4e4e4] border-l border-[#e4e4e4]">
          <div className="h-[17px] bg-white border-b-2 border-[#cfcfcf] flex items-center justify-center"><svg width="9" height="5" viewBox="0 0 9 5"><path d="M4.500 0L9 5H0z" fill="#7d7d7d" /></svg></div>
          <div className="h-[168px]" />
          <div className="h-[230px] bg-[#f9f9f9] border-y border-[#cfcfcf]" />
          <div className="flex-1" />
          <div className="h-[17px] bg-white border-t-2 border-[#cfcfcf] flex items-center justify-center"><svg width="9" height="5" viewBox="0 0 9 5"><path d="M0 0h9L4.500 5z" fill="#7d7d7d" /></svg></div>
        </div>
      </div>
      <div className="flex justify-end gap-[6px] pr-[11px] mt-[6px]">
        <div className="w-[78px] h-[26px] rounded-[3px] bg-[#2f80e2] text-white text-[12px] flex items-center justify-center">确定</div>
        <div className="w-[78px] h-[26px] rounded-[3px] bg-[#f6f7f8] border border-[#c8cdd8] text-[#333] text-[12px] flex items-center justify-center">取消</div>
      </div>
    </div>
  );
}

function Annotations() {
  return (
    <svg viewBox="0 0 994 884" className="absolute inset-0 w-[994px] h-[884px] pointer-events-none">
      <defs>
        <linearGradient id="shaft" gradientUnits="userSpaceOnUse" x1="0" y1="110" x2="0" y2="270">
          <stop offset="0" stopColor="#6e1f1f" />
          <stop offset="1" stopColor="#f04545" />
        </linearGradient>
      </defs>
      <ellipse cx="739.500" cy="80" rx="40.500" ry="31" fill="none" stroke="#d9535a" />
      <ellipse cx="364" cy="617" rx="68" ry="31" fill="none" stroke="#c84040" />
      <polygon points="738.400,110.200 737.600,109.800 400.800,569.700 403.600,571.700" fill="url(#shaft)" />
      <polygon points="394,582 397.400,567.200 407,574.200" fill="#f04545" />
    </svg>
  );
}

export default function App() {
  return (
    <div className="relative w-[994px] h-[884px] overflow-hidden bg-white flex flex-col font-['Noto_Sans','Noto_Sans_CJK_SC',sans-serif]">
      <Ribbon />
      <Toolbar />
      <div className="flex-1 flex min-h-0">
        <LeftPanel />
        <Canvas />
      </div>
      <Dialog1 />
      <Dialog2 />
      <Annotations />
    </div>
  );
}
